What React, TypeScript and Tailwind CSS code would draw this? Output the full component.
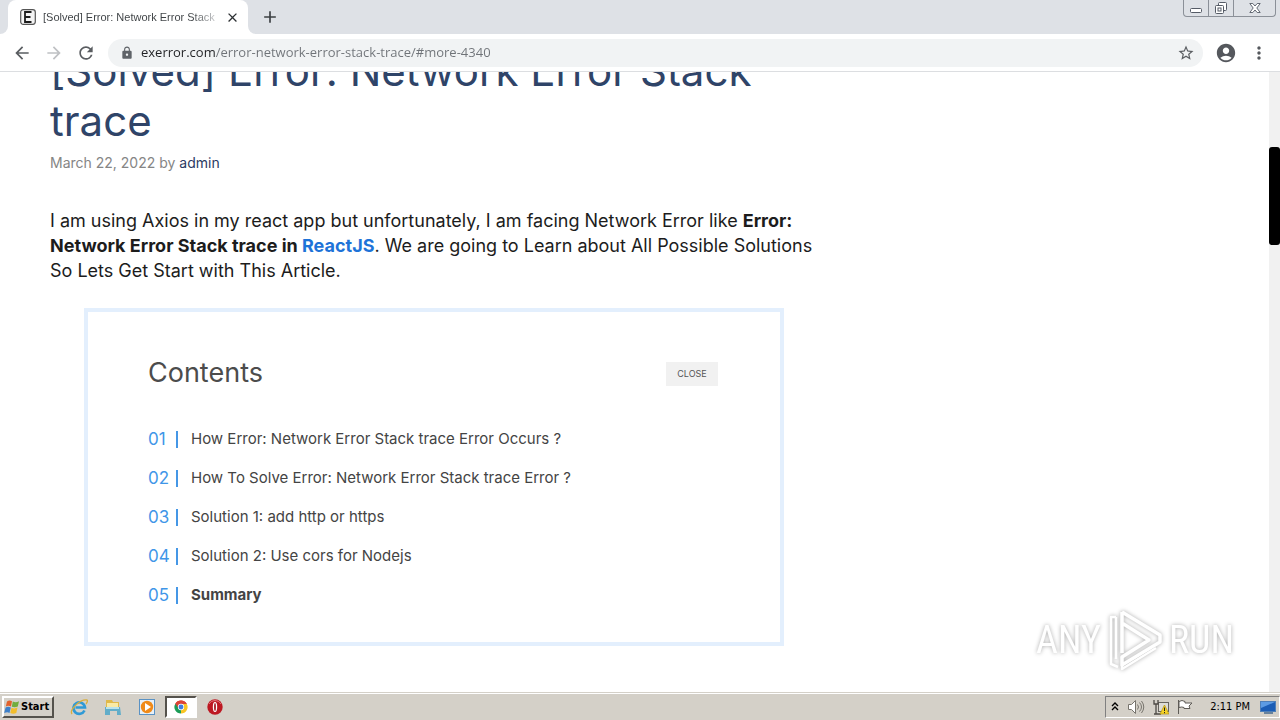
import type { ReactNode } from "react";
import {
  MdAccountCircle,
  MdAdd,
  MdArrowBack,
  MdArrowForward,
  MdClose,
  MdLock,
  MdMoreVert,
  MdRefresh,
  MdStarBorder,
} from "react-icons/md";

const tocItems = [
  "How Error: Network Error Stack trace Error Occurs ?",
  "How To Solve Error: Network Error Stack trace Error ?",
  "Solution 1: add http or https",
  "Solution 2: Use cors for Nodejs",
  "Summary",
];

function Favicon() {
  return (
    <svg viewBox="0 0 16 16" className="size-4 shrink-0" aria-hidden="true">
      <rect x="0.7" y="0.7" width="14.6" height="14.6" rx="2.5" fill="#f4f4f4" stroke="#555" strokeWidth="1.2" />
      <path d="M11.5 3H5v10h6.5M5 8h5.5" fill="none" stroke="#1c1c1c" strokeWidth="1.8" />
    </svg>
  );
}

function WindowButtons() {
  const base = "flex h-[17px] items-center justify-center border-b border-r border-[#8b9098]";
  return (
    <div className="mr-1 flex">
      <button aria-label="Minimize" className={`${base} w-[26px] rounded-bl border-l`}>
        <svg viewBox="0 0 12 16" className="h-4 w-3">
          <rect x="0.5" y="8.5" width="11" height="4" rx="1" fill="#fff" stroke="#555b66" />
        </svg>
      </button>
      <button aria-label="Restore" className={`${base} w-[25px]`}>
        <svg viewBox="0 0 14 16" className="h-4 w-[14px]" fill="#fff" stroke="#555b66">
          <rect x="4.5" y="2.5" width="8" height="8" rx="1" />
          <rect x="1.5" y="5.5" width="8" height="8" rx="1" />
          <rect x="4" y="8" width="3" height="3" />
        </svg>
      </button>
      <button aria-label="Close window" className={`${base} w-[42px] rounded-br`}>
        <svg viewBox="0 0 12 16" className="h-4 w-3" fill="#fff" stroke="#555b66" strokeWidth="0.9">
          <path d="M.8 3.500h3L6 6l2.200-2.500h3L7.800 8l3.400 4.500h-3L6 10l-2.200 2.500h-3L4.200 8z" />
        </svg>
      </button>
    </div>
  );
}

function TabStrip() {
  return (
    <div className="flex h-[34px] shrink-0 items-start bg-[#dee1e6]">
      <div className="flex h-full flex-1">
        <div className="flex w-2 items-end bg-white">
          <div className="h-full w-full rounded-br-lg bg-[#dee1e6]" />
        </div>
        <div className="flex h-full w-60 items-center gap-[7px] rounded-t-lg bg-white pl-3 pr-2">
          <Favicon />
          <span className="min-w-0 flex-1 overflow-hidden whitespace-nowrap bg-linear-to-r from-[#3c4043] from-85% to-[#d5d6d8] bg-clip-text font-['Liberation_Sans',sans-serif] text-[11px] leading-4 text-transparent">
            [Solved] Error: Network Error Stack
          </span>
          <button aria-label="Close tab" className="flex size-4 items-center justify-center text-[#2c3033]">
            <MdClose className="size-[15px]" />
          </button>
        </div>
        <div className="flex w-2 items-end bg-white">
          <div className="h-full w-full rounded-bl-lg bg-[#dee1e6]" />
        </div>
        <button aria-label="New tab" className="ml-1 flex w-5 items-center justify-center text-[#3c4043]">
          <MdAdd className="size-5" />
        </button>
      </div>
      <WindowButtons />
    </div>
  );
}

function Toolbar() {
  return (
    <div className="flex h-[38px] shrink-0 items-center border-b border-[#dcdee1] bg-white px-3">
      <button aria-label="Back" className="mr-3 text-[#5a5d61]">
        <MdArrowBack className="size-5" />
      </button>
      <button aria-label="Forward" className="mr-3 text-[#bfc1c4]">
        <MdArrowForward className="size-5" />
      </button>
      <button aria-label="Reload" className="mr-3 text-[#5a5d61]">
        <MdRefresh className="size-5" />
      </button>
      <div className="flex h-7 min-w-0 flex-1 items-center rounded-full bg-[#f1f3f4] pl-3 pr-2">
        <MdLock className="mr-[7px] size-[14px] shrink-0 text-[#5f6368]" />
        <input
          aria-label="Address"
          defaultValue="exerror.com/error-network-error-stack-trace/#more-4340"
          className="min-w-0 flex-1 bg-[linear-gradient(90deg,#202124_75px,#6f7378_75px)] bg-clip-text font-['Open_Sans','Noto_Sans',sans-serif] text-[13px] text-transparent outline-none"
        />
        <button aria-label="Bookmark this page" className="text-[#5a5d61]">
          <MdStarBorder className="size-[18px]" />
        </button>
      </div>
      <button aria-label="Profile" className="ml-3 text-[#55585d]">
        <MdAccountCircle className="size-[22px]" />
      </button>
      <button aria-label="Menu" className="ml-3 -mr-px text-[#55585d]">
        <MdMoreVert className="size-5" />
      </button>
    </div>
  );
}

function Contents() {
  return (
    <nav aria-label="Contents" className="mx-[34px] mt-[25px] border-4 border-[#e3effd] px-[60px] pb-[27px] pt-[46px]">
      <div className="flex items-center justify-between pr-[2px]">
        <h2 className="pb-[3px] text-[27px] leading-[29px] text-[#4c4c4c]">Contents</h2>
        <button className="h-6 w-[52px] bg-[#f1f1f1] text-[9px] text-[#555]">CLOSE</button>
      </div>
      <ol className="mt-[30px]">
        {tocItems.map((item, i) => (
          <li key={item} className="flex h-[39px] items-center text-[#444]">
            <span className="w-[28px] text-[17px] text-[#3f96e8]">{`0${i + 1}`}</span>
            <span className="mr-[13px] h-[17px] w-[2px] bg-[#4597e6]" />
            <a href={`#section-${i + 1}`} className={i === 4 ? "text-[15px] font-bold" : "text-[15px]"}>
              {item}
            </a>
          </li>
        ))}
      </ol>
    </nav>
  );
}

function Watermark() {
  return (
    <div className="pointer-events-none absolute bottom-5 right-[46px] flex items-center gap-1 font-['Roboto_Condensed','Liberation_Sans_Narrow','Liberation_Sans',sans-serif] text-[38px] leading-[64px] text-white drop-shadow-[0_0_2px_#aaa]">
      <span>ANY</span>
      <svg viewBox="0 0 60 64" className="h-16 w-[60px]" fill="none" stroke="#fff" strokeWidth="3.500" strokeLinejoin="round">
        <path d="M17 4v41M17 4l38 23v7L17 57v-8l27-17L17 15" />
        <path d="M11 9H6v47l7 3M11 9v42M17 57v4l34-21" strokeWidth="2.500" />
      </svg>
      <span>RUN</span>
    </div>
  );
}

function Page() {
  return (
    <div className="relative flex min-h-0 flex-1 overflow-hidden bg-white">
      <main className="min-w-0 flex-1 overflow-hidden pl-[50px] font-['Inter',sans-serif]">
        <article className="w-[768px]">
          <h1 className="-mt-[26px] text-[42px] leading-[50px] text-[#2f4468]">
            [Solved] Error: Network Error Stack
            <br />
            trace
          </h1>
          <p className="mt-[6px] text-[14px] leading-[22px] text-[#858585]">
            March 22, 2022 by{" "}
            <a href="#admin" className="text-[#2b3b63]">
              admin
            </a>
          </p>
          <p className="mt-[34px] whitespace-nowrap text-[18px] leading-[25px] text-[#1c1c1c]">
            I am using Axios in my react app but unfortunately, I am facing Network Error like <strong>Error:</strong>
            <br />
            <strong>
              Network Error Stack trace in{" "}
              <a href="#reactjs" className="text-[#1e73d8]">
                ReactJS
              </a>
            </strong>
            . We are going to Learn about All Possible Solutions
            <br />
            So Lets Get Start with This Article.
          </p>
          <Contents />
        </article>
      </main>
      <div className="w-[11px] shrink-0 bg-[#f1f1f1] pt-[75px]">
        <div className="h-[98px] rounded-[3px] bg-black" />
      </div>
      <Watermark />
    </div>
  );
}

function IeIcon() {
  return (
    <svg viewBox="0 0 18 18" className="size-[18px]" fill="none">
      <path d="M14.500 12.500a5.800 5.800 0 1 1 .5-3H5.500" stroke="#2f9ad6" strokeWidth="2.600" />
      <path d="M2 16C-1 12 10 1 17 2c1 .5 0 3-1 4" stroke="#d9ae3c" strokeWidth="1.300" />
    </svg>
  );
}

function FolderIcon() {
  return (
    <svg viewBox="0 0 18 18" className="size-[18px]">
      <path d="M2 2h6l1 2h6v9H2z" fill="#e0b94a" />
      <path d="M3 5h11v4H3z" fill="#f9eaa5" />
      <path d="M1 9h15l1 8h-4v-4H6v4H1z" fill="#62adc9" />
      <path d="M2 9h13v2H2z" fill="#b9e2ec" />
    </svg>
  );
}

function PlayerIcon() {
  return (
    <svg viewBox="0 0 18 18" className="size-[18px]">
      <rect x="1.500" y="1.500" width="15" height="15" fill="#e7f0f8" stroke="#5a92c4" />
      <circle cx="9" cy="9" r="6.200" fill="#f08a18" />
      <path d="M7 5l6 4-6 4z" fill="#fff" />
    </svg>
  );
}

function ChromeIcon() {
  return (
    <svg viewBox="0 0 16 16" className="size-[14px]">
      <path d="M8 8L1.500 4.200A7.500 7.500 0 0 1 14.500 4.200z" fill="#dc4437" />
      <path d="M8 8V.5l6.500 3.700A7.500 7.500 0 0 1 8 15.500z" fill="#f9c524" />
      <path d="M8 8v7.500A7.500 7.500 0 0 1 1.500 4.200z" fill="#1b9c57" />
      <path d="M8 4.500h6.600A7.500 7.500 0 0 0 1.500 4.200L5 9z" fill="#dc4437" />
      <circle cx="8" cy="8" r="3.600" fill="#fff" />
      <circle cx="8" cy="8" r="2.800" fill="#3f7de0" />
    </svg>
  );
}

function OperaIcon() {
  return (
    <svg viewBox="0 0 16 16" className="size-4">
      <circle cx="8" cy="8" r="7.700" fill="#bd1822" />
      <path d="M2 5a7 7 0 0 1 12 0" fill="none" stroke="#e37a80" />
      <ellipse cx="8" cy="8" rx="2.200" ry="5" fill="#fff" />
      <ellipse cx="8" cy="8" rx="0.900" ry="4" fill="#a31620" />
    </svg>
  );
}

function TaskButton({ label, active, children }: { label: string; active?: boolean; children: ReactNode }) {
  return (
    <button
      aria-label={label}
      className={
        active
          ? "flex h-[22px] w-8 items-center justify-center border-2 border-b-white border-l-[#55524c] border-r-white border-t-[#55524c] bg-white"
          : "flex h-[22px] w-8 items-center justify-center"
      }
    >
      {children}
    </button>
  );
}

function Taskbar() {
  return (
    <div className="flex h-7 shrink-0 items-center border-t border-[#d4d0c8] bg-[#d4d0c8] font-['DejaVu_Sans_Condensed','DejaVu_Sans',sans-serif] text-[11px] leading-4 text-black shadow-[inset_0_1px_0_#fff]">
      <button className="ml-[2px] flex h-[22px] w-[52px] items-center gap-px border-2 border-b-[#55524c] border-l-white border-r-[#55524c] border-t-white font-bold">
        <svg viewBox="0 0 16 16" className="size-4 shrink-0" aria-hidden="true">
          <path d="M3 2.500C5 1 6.500 1.500 8 2.200L7 7.500C5 6.500 3.500 6.500 1.800 7.500z" fill="#e2612b" />
          <path d="M8.800 2.600c2 .9 4.200.8 6.200-.4L13.800 7.500c-2 1-4 1-6 .3z" fill="#72ad3d" />
          <path d="M1.600 8.500C3.500 7.500 5 7.700 6.800 8.500L5.500 14C4 13 2.500 13 .2 14z" fill="#3d7fc9" />
          <path d="M7.500 8.800c2 .9 4.100.8 6-.2L12.300 14c-2 1-4 .9-6 .1z" fill="#f2bd2c" />
        </svg>
        <span>Start</span>
      </button>
      <div className="ml-[9px] flex gap-[2px]">
        <TaskButton label="Internet Explorer">
          <IeIcon />
        </TaskButton>
        <TaskButton label="Windows Explorer">
          <FolderIcon />
        </TaskButton>
        <TaskButton label="Media Player">
          <PlayerIcon />
        </TaskButton>
        <TaskButton label="Chrome" active>
          <ChromeIcon />
        </TaskButton>
        <TaskButton label="Opera">
          <OperaIcon />
        </TaskButton>
      </div>
      <div className="ml-auto flex h-[22px] items-center border border-b-white border-l-[#808080] border-r-white border-t-[#808080] pl-[5px] pr-[3px]">
        <svg viewBox="0 0 8 12" className="mr-2 h-3 w-2" fill="none" stroke="#000" strokeWidth="1.400" aria-hidden="true">
          <path d="M1 5l3-3 3 3M1 9l3-3 3 3" />
        </svg>
        <svg viewBox="0 0 18 16" className="mr-2 h-4 w-[18px]" fill="#fff" stroke="#77746d" aria-hidden="true">
          <path d="M1.500 5.500h3l4-4v13l-4-4h-3z" />
          <path d="M10.500 5.500q2 2.500 0 5M12.500 3.500q4 4.500 0 9M14.500 2q4.500 6 0 12" fill="none" />
        </svg>
        <svg viewBox="0 0 16 16" className="mr-2 size-4" aria-hidden="true">
          <rect x="5.500" y="3.500" width="10" height="9" fill="#dddcd7" stroke="#66635e" />
          <path d="M1 1v4h4V1M3 5v10M1 15h7" fill="none" stroke="#4d4a45" strokeWidth="1.300" />
          <path d="M11.500 6l4.500 9H7z" fill="#f6d327" stroke="#b4920e" strokeWidth="0.700" />
          <path d="M11.500 8.500v3.500M11.500 13v1.200" stroke="#222" />
        </svg>
        <svg viewBox="0 0 17 16" className="mr-4 h-4 w-[17px]" fill="#fff" stroke="#5e5b56" aria-hidden="true">
          <path d="M1.500 1v14M2 2.500q3-2 6 0v1.500h7l-3 3 1 2.500H7V8.500q-2-1-5 0z" />
        </svg>
        <time className="mr-[10px]">2:11 PM</time>
        <svg viewBox="0 0 16 14" className="h-[14px] w-4" aria-hidden="true">
          <rect x="0.500" y="1.500" width="15" height="10" fill="#1b5db5" stroke="#4e7fb8" />
          <path d="M1 2h14L1 8z" fill="#5c9be3" />
          <path d="M4 13h9" stroke="#45698e" strokeWidth="1.500" />
        </svg>
      </div>
    </div>
  );
}

export default function App() {
  return (
    <div className="flex h-screen flex-col overflow-hidden bg-white font-['Noto_Sans',sans-serif]">
      <TabStrip />
      <Toolbar />
      <Page />
      <Taskbar />
    </div>
  );
}
